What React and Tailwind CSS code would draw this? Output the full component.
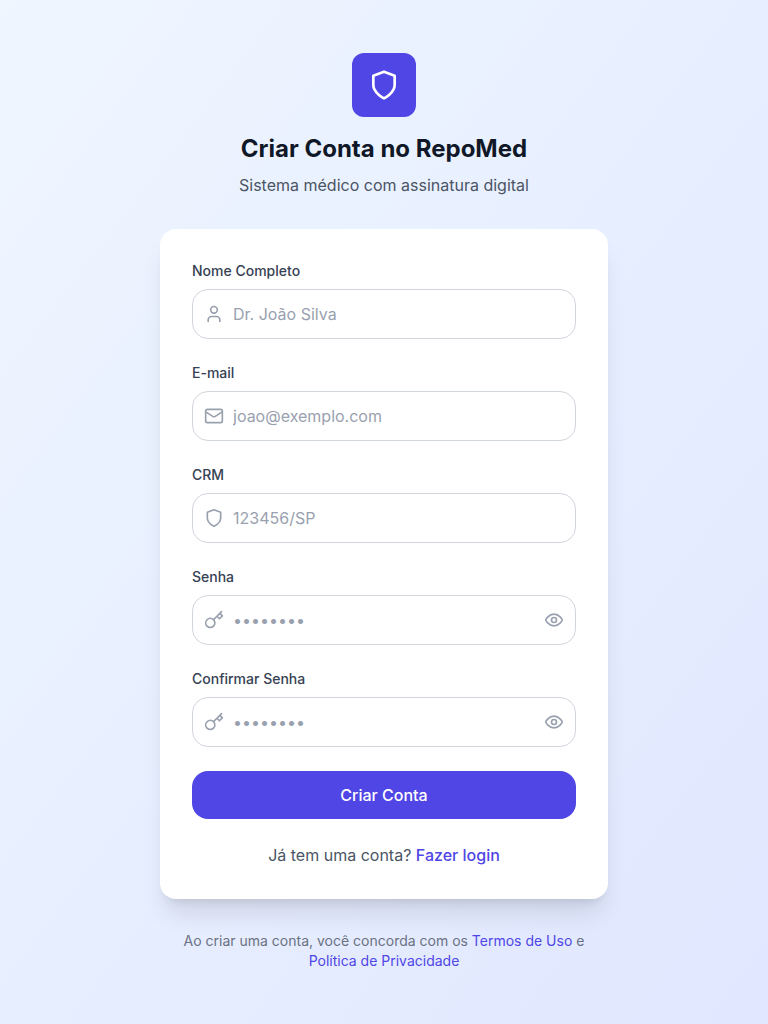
import { useState } from "react";
import { User, Mail, EyeOff } from "lucide-react";

function Glyph({ className, children }) {
  return (
    <svg
      viewBox="0 0 24 24"
      fill="none"
      stroke="currentColor"
      strokeWidth="2"
      strokeLinecap="round"
      strokeLinejoin="round"
      aria-hidden="true"
      className={className}
    >
      {children}
    </svg>
  );
}

function Shield({ className }) {
  return (
    <Glyph className={className}>
      <path d="M12 22s8-4 8-10V5l-8-3-8 3v7c0 6 8 10 8 10z" />
    </Glyph>
  );
}

function Key({ className }) {
  return (
    <Glyph className={className}>
      <path d="m21 2-2 2m-7.61 7.61a5.5 5.5 0 1 1-7.778 7.778 5.5 5.5 0 0 1 7.777-7.777zm0 0L15.5 7.5m0 0 3 3L22 7l-3-3m-3.5 3.5L19 4" />
    </Glyph>
  );
}

function Eye({ className }) {
  return (
    <Glyph className={className}>
      <path d="M2 12s3-7 10-7 10 7 10 7-3 7-10 7-10-7-10-7Z" />
      <circle cx="12" cy="12" r="3" />
    </Glyph>
  );
}

function Field({ id, label, icon: Icon, type = "text", placeholder }) {
  const [visible, setVisible] = useState(false);
  const secret = type === "password";
  return (
    <div>
      <label htmlFor={id} className="mb-2 block text-sm font-medium text-gray-700">
        {label}
      </label>
      <div className="relative">
        <Icon className="pointer-events-none absolute top-1/2 left-3 size-5 -translate-y-1/2 text-gray-400" />
        <input
          id={id}
          type={secret && visible ? "text" : type}
          placeholder={placeholder}
          className={`block w-full rounded-2xl border border-gray-300 bg-white py-3 pl-10 text-base text-gray-900 placeholder:text-gray-400 focus:border-indigo-600 focus:outline-none ${secret ? "pr-12" : "pr-4"}`}
        />
        {secret && (
          <button
            type="button"
            aria-label={visible ? "Ocultar senha" : "Mostrar senha"}
            onClick={() => setVisible(!visible)}
            className="absolute inset-y-0 right-3 flex items-center text-gray-400"
          >
            {visible ? <EyeOff className="size-5" /> : <Eye className="size-5" />}
          </button>
        )}
      </div>
    </div>
  );
}

export default function App() {
  return (
    <div className="flex min-h-screen items-center justify-center bg-linear-to-br from-[#eff6ff] to-[#e0e7ff] p-4 font-[Inter,sans-serif]">
      <main className="w-full max-w-md">
        <header className="mb-8 text-center">
          <div className="mx-auto mb-4 flex size-16 items-center justify-center rounded-xl bg-[#4f46e5] text-white">
            <Shield className="size-8" />
          </div>
          <h1 className="mb-2 text-2xl font-bold text-gray-900">Criar Conta no RepoMed</h1>
          <p className="text-gray-600">Sistema médico com assinatura digital</p>
        </header>
        <section className="rounded-2xl bg-white p-8 shadow-xl">
          <form className="space-y-6" onSubmit={(e) => e.preventDefault()}>
            <Field id="name" label="Nome Completo" icon={User} placeholder="Dr. João Silva" />
            <Field id="email" label="E-mail" icon={Mail} type="email" placeholder="joao@exemplo.com" />
            <Field id="crm" label="CRM" icon={Shield} placeholder="123456/SP" />
            <Field id="password" label="Senha" icon={Key} type="password" placeholder="••••••••" />
            <Field id="confirm" label="Confirmar Senha" icon={Key} type="password" placeholder="••••••••" />
            <button type="submit" className="w-full rounded-2xl bg-[#4f46e5] py-3 font-medium text-white">
              Criar Conta
            </button>
          </form>
          <p className="mt-6 text-center text-gray-600">
            Já tem uma conta?{" "}
            <a href="#login" className="font-medium text-[#4f46e5]">Fazer login</a>
          </p>
        </section>
        <footer className="mt-8 text-center text-sm text-gray-500">
          Ao criar uma conta, você concorda com os{" "}
          <a href="#termos" className="text-[#4f46e5]">Termos de Uso</a> e{" "}
          <a href="#privacidade" className="text-[#4f46e5]">Política de Privacidade</a>
        </footer>
      </main>
    </div>
  );
}
